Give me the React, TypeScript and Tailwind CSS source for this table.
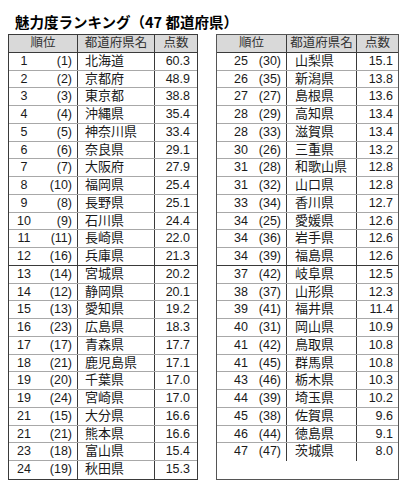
import React from "react";

type Row = [string, string, string, string];

const left: Row[] = [
  ["1", "(1)", "北海道", "60.3"],
  ["2", "(2)", "京都府", "48.9"],
  ["3", "(3)", "東京都", "38.8"],
  ["4", "(4)", "沖縄県", "35.4"],
  ["5", "(5)", "神奈川県", "33.4"],
  ["6", "(6)", "奈良県", "29.1"],
  ["7", "(7)", "大阪府", "27.9"],
  ["8", "(10)", "福岡県", "25.4"],
  ["9", "(8)", "長野県", "25.1"],
  ["10", "(9)", "石川県", "24.4"],
  ["11", "(11)", "長崎県", "22.0"],
  ["12", "(16)", "兵庫県", "21.3"],
  ["13", "(14)", "宮城県", "20.2"],
  ["14", "(12)", "静岡県", "20.1"],
  ["15", "(13)", "愛知県", "19.2"],
  ["16", "(23)", "広島県", "18.3"],
  ["17", "(17)", "青森県", "17.7"],
  ["18", "(21)", "鹿児島県", "17.1"],
  ["19", "(20)", "千葉県", "17.0"],
  ["19", "(24)", "宮崎県", "17.0"],
  ["21", "(15)", "大分県", "16.6"],
  ["21", "(21)", "熊本県", "16.6"],
  ["23", "(18)", "富山県", "15.4"],
  ["24", "(19)", "秋田県", "15.3"],
];

const right: Row[] = [
  ["25", "(30)", "山梨県", "15.1"],
  ["26", "(35)", "新潟県", "13.8"],
  ["27", "(27)", "島根県", "13.6"],
  ["28", "(29)", "高知県", "13.4"],
  ["28", "(33)", "滋賀県", "13.4"],
  ["30", "(26)", "三重県", "13.2"],
  ["31", "(28)", "和歌山県", "12.8"],
  ["31", "(32)", "山口県", "12.8"],
  ["33", "(34)", "香川県", "12.7"],
  ["34", "(25)", "愛媛県", "12.6"],
  ["34", "(36)", "岩手県", "12.6"],
  ["34", "(39)", "福島県", "12.6"],
  ["37", "(42)", "岐阜県", "12.5"],
  ["38", "(37)", "山形県", "12.3"],
  ["39", "(41)", "福井県", "11.4"],
  ["40", "(31)", "岡山県", "10.9"],
  ["41", "(42)", "鳥取県", "10.8"],
  ["41", "(45)", "群馬県", "10.8"],
  ["43", "(46)", "栃木県", "10.3"],
  ["44", "(39)", "埼玉県", "10.2"],
  ["45", "(38)", "佐賀県", "9.6"],
  ["46", "(44)", "徳島県", "9.1"],
  ["47", "(47)", "茨城県", "8.0"],
];

function LeftTable() {
  return (
    <div className="w-[190px] border border-[#3a3a3a]">
      <div className="flex h-[17.75px] bg-[#d9d9d9] border-b border-[#3a3a3a] text-[#333] text-[12.5px] leading-[16.75px]">
        <div className="w-[69px] border-r border-[#3a3a3a] text-center">順位</div>
        <div className="w-[77px] border-r border-[#3a3a3a] text-center">都道府県名</div>
        <div className="flex-1 text-center">点数</div>
      </div>
      {left.map((r, i) => (
        <div
          key={i}
          className={
            "flex h-[17.75px] leading-[16.75px] " +
            (i === left.length - 1
              ? "border-b-0"
              : i === 11
              ? "border-b border-[#3a3a3a]"
              : "border-b border-[#a8a8a8]")
          }
        >
          <div className="w-[69px] flex border-r border-[#3a3a3a]">
            <span className="w-[30px] text-center">{r[0]}</span>
            <span className="flex-1 text-right pr-[5px]">{r[1]}</span>
          </div>
          <div className="w-[77px] border-r border-[#3a3a3a] pl-[7px] text-[13px]">{r[2]}</div>
          <div className="flex-1 text-right pr-[7px]">{r[3]}</div>
        </div>
      ))}
    </div>
  );
}

function RightTable() {
  return (
    <div className="w-[183px] border border-[#555]">
      <div className="flex h-[17.75px] bg-[#d9d9d9] border-b border-[#3a3a3a] text-[#333] text-[12.5px] leading-[16.75px]">
        <div className="w-[70px] border-r border-[#3a3a3a] text-center">順位</div>
        <div className="w-[70px] border-r border-[#3a3a3a] text-center">都道府県名</div>
        <div className="flex-1 text-center">点数</div>
      </div>
      {right.map((r, i) => (
        <div
          key={i}
          className={
            "flex h-[17.75px] leading-[16.75px] " +
            (i === right.length - 1
              ? "border-b-0"
              : i === 11
              ? "border-b border-[#3a3a3a]"
              : "border-b border-[#a8a8a8]")
          }
        >
          <div className="w-[70px] flex border-r border-[#3a3a3a]">
            <span className="ml-[9px] w-[30px] text-center">{r[0]}</span>
            <span className="flex-1 text-right pr-[5px]">{r[1]}</span>
          </div>
          <div className="w-[70px] border-r border-[#3a3a3a] pl-[8px] text-[13px]">{r[2]}</div>
          <div className="flex-1 text-right pr-[5px]">{r[3]}</div>
        </div>
      ))}
    </div>
  );
}

export default function App() {
  return (
    <div className="w-[412px] h-[500px] bg-white text-[#1a1a1a] text-[12.5px] font-['Liberation_Sans','Noto_Sans_CJK_JP',sans-serif]">
      <div className="h-[34px] pl-[15px] pt-[13px]">
        <div className="text-[14.5px] leading-[18px] font-bold text-black font-['Noto_Sans_CJK_JP',sans-serif]">
          魅力度ランキング（47 都道府県）
        </div>
      </div>
      <div className="flex pl-[8px] gap-[18px]">
        <LeftTable />
        <RightTable />
      </div>
    </div>
  );
}
